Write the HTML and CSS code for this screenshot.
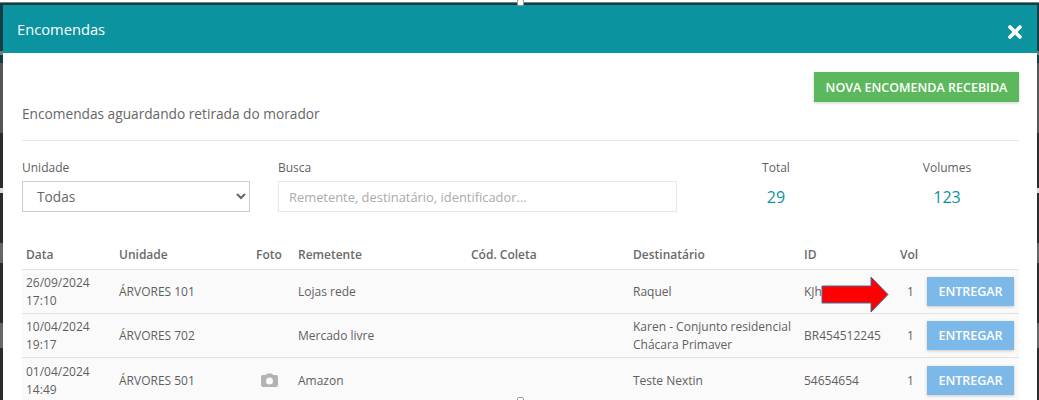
FILE: index.html
```html
<!DOCTYPE html>
<html lang="pt">
<head>
<meta charset="utf-8">
<title>Encomendas</title>
<link rel="stylesheet" href="styles.css">
</head>
<body>
<div class="modal">
  <header class="modal-head">
    <h1 class="modal-title">Encomendas</h1>
    <span class="close">
      <svg width="14" height="14" viewBox="0 0 14 14"><path d="M2 2l10 10M12 2L2 12" stroke="#fff" stroke-width="3.6" stroke-linecap="round"/></svg>
    </span>
  </header>
  <div class="modal-body">
    <div class="top-row">
      <p class="subtitle">Encomendas aguardando retirada do morador</p>
      <button class="btn-new">NOVA ENCOMENDA RECEBIDA</button>
    </div>
    <div class="filters">
      <div class="f-unit">
        <label class="lbl">Unidade</label>
        <select class="sel"><option>Todas</option></select>
      </div>
      <div class="f-search">
        <label class="lbl">Busca</label>
        <input class="inp" placeholder="Remetente, destinatário, identificador...">
      </div>
      <div class="stat stat-total"><span class="lbl">Total</span><strong class="num">29</strong></div>
      <div class="stat stat-vol"><span class="lbl">Volumes</span><strong class="num">123</strong></div>
    </div>
    <div class="table">
      <div class="row head">
        <div>Data</div><div>Unidade</div><div>Foto</div><div>Remetente</div><div>Cód. Coleta</div><div>Destinatário</div><div>ID</div><div>Vol</div><div></div>
      </div>
      <div class="row r1">
        <div>26/09/2024<br>17:10</div><div>ÁRVORES 101</div><div></div><div>Lojas rede</div><div></div><div>Raquel</div><div>KJh</div><div class="vol">1</div><div><button class="btn-go">ENTREGAR</button></div>
      </div>
      <div class="row r2">
        <div>10/04/2024<br>19:17</div><div>ÁRVORES 702</div><div></div><div>Mercado livre</div><div></div><div>Karen - Conjunto residencial<br>Chácara Primaver</div><div>BR454512245</div><div class="vol">1</div><div><button class="btn-go">ENTREGAR</button></div>
      </div>
      <div class="row r3">
        <div>01/04/2024<br>14:49</div><div>ÁRVORES 501</div>
        <div class="cam"><svg width="17" height="14" viewBox="0 0 17 14"><path fill="#b3b3b3" fill-rule="evenodd" d="M2 2h3l1-1.500h5L12 2h3a2 2 0 0 1 2 2v8a2 2 0 0 1-2 2H2a2 2 0 0 1-2-2V4a2 2 0 0 1 2-2zm6.500 2.500a3.500 3.500 0 1 0 0 7 3.500 3.500 0 0 0 0-7z"/></svg></div>
        <div>Amazon</div><div></div><div>Teste Nextin</div><div>54654654</div><div class="vol">1</div><div><button class="btn-go">ENTREGAR</button></div>
      </div>
    </div>
  </div>
  <svg class="arrow" width="80" height="40" viewBox="0 0 80 40"><path d="M1 10H50V1L67 18.500 50 36V27H1z" fill="#f00" stroke="#41719c" stroke-width="1"/></svg>
</div>
<span class="handle h-top"></span>
<span class="handle h-bot"></span>
</body>
</html>
```
FILE: styles.css
```css
* { box-sizing: border-box; }
html, body { margin: 0; height: 400px; overflow: hidden; }
body {
  position: relative;
  padding: 5px 2px 0 3px;
  font-family: "Open Sans", sans-serif;
  font-size: 12px;
  color: #5f5f5f;
  background:
    linear-gradient(#fff, #fff) 0 0 / 100% 2px no-repeat,
    linear-gradient(#7a7f80, #7a7f80) 0 2px / 100% 1px no-repeat,
    linear-gradient(#113f44 0 48px, #777 48px 52px, #113f44 52px 60px, #555 60px 130px, #2c2c2c 130px 185px, #ddd 185px 190px, #2c2c2c 190px 240px, #666 240px 260px, #2c2c2c 260px 320px, #666 320px 345px, #2c2c2c 345px) 0 3px / 100% 397px no-repeat;
}
.modal { position: relative; background: #fff; height: 395px; overflow: hidden; }
.modal-head {
  height: 48px;
  background: #0b93a0;
  display: flex;
  justify-content: space-between;
  padding: 14px 15px 0 14px;
}
.modal-title { margin: 0; font-size: 14.7px; font-weight: 400; color: #fff; line-height: 20px; }
.close { margin-top: 6px; height: 14px; }
.modal-body { padding: 0 18px 0 19px; }
.top-row { display: flex; justify-content: space-between; height: 88px; border-bottom: 1px solid #e8e8e8; padding-top: 19px; }
.subtitle { margin: 32px 0 0; font-size: 13.7px; line-height: 20px; color: #666; }
.btn-new {
  height: 30px; width: 205px; border: 0; background: #5cb85c; color: #fff;
  font: 600 12.5px "Open Sans", sans-serif;
  box-shadow: 0 1px 3px rgba(0,0,0,.2);
}
.filters { display: flex; height: 100px; padding-top: 18px; }
.lbl { display: block; font-size: 12px; line-height: 17px; color: #5f5f5f; }
.f-unit { width: 228px; margin-right: 28px; }
.f-search { width: 399px; }
.sel, .inp { width: 100%; height: 31px; margin-top: 5px; background: #fff; font: 13.7px "Open Sans", sans-serif; }
.sel { border: 1px solid #ccc; padding-left: 10px; color: #666; }
.inp { border: 1px solid #e8e8e8; padding: 0 10px; font-size: 12.9px; }
.inp::placeholder { color: #aaa; }
.stat { display: flex; flex-direction: column; align-items: center; }
.stat-total { width: 70px; margin-left: 64px; }
.stat-vol { width: 70px; margin-left: 101px; }
.num { font-size: 16px; font-weight: 400; color: #0b93a0; margin-top: 10px; line-height: 22px; }
.row {
  display: grid;
  grid-template-columns: 93px 137px 42px 173px 162px 171px 96px 27px 1fr;
  align-items: center;
  padding-left: 4px;
  border-bottom: 1px solid #e3e3e3;
  background: #fafafa;
  line-height: 18px;
}
.head { height: 29px; background: #fff; font-weight: 600; color: #6a6a6a; }
.r1, .r2 { height: 44px; }
.r3 { height: 46px; }
.vol { padding-left: 7px; }
.cam { padding: 3px 0 0 5px; }
.btn-go {
  width: 87px; height: 29px; border: 0; background: #7cb9e8; color: #fff;
  font: 600 12.5px "Open Sans", sans-serif;
  box-shadow: 0 1px 3px rgba(0,0,0,.2);
}
.arrow { position: absolute; left: 818px; top: 271px; }
.handle { position: absolute; width: 7px; height: 7px; background: #fff; border: 1px solid #999; border-radius: 2px; left: 517px; }
.h-top { top: -1px; }
.h-bot { top: 397px; }
```
